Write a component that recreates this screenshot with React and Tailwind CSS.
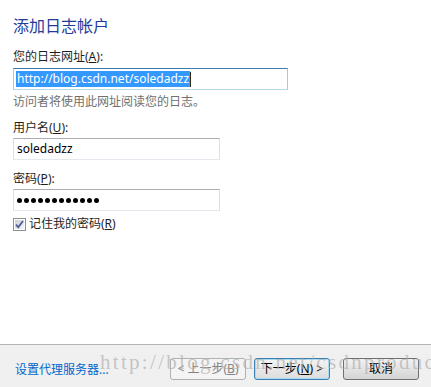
import React from 'react';

const font = "font-['Noto_Sans','Noto_Sans_CJK_SC',sans-serif]";

function Field({ focused, width, children }) {
  return (
    <div
      className={`${width} h-[22px] flex items-center pl-[2px] border ${
        focused
          ? 'border-t-[#3d7bad] border-x-[#a4c9e3] border-b-[#b7d9ed]'
          : 'border-t-[#abadb3] border-x-[#dbdfe6] border-b-[#e3e9ef]'
      } bg-white`}
    >
      {children}
    </div>
  );
}

function CheckBox() {
  return (
    <svg width="13" height="13" viewBox="0 0 13 13" className="shrink-0">
      <defs>
        <linearGradient id="cb" x1="0" y1="0" x2="1" y2="1">
          <stop offset="0" stopColor="#cbcfd5" />
          <stop offset="1" stopColor="#f6f6f6" />
        </linearGradient>
      </defs>
      <rect x="0.5" y="0.5" width="12" height="12" fill="#fff" stroke="#8e8f8f" />
      <rect x="2" y="2" width="9" height="9" fill="url(#cb)" />
      <path d="M3 6.5 L5.2 9.2 L10 3" fill="none" stroke="#4a5f97" strokeWidth="1.8" />
    </svg>
  );
}

function Button({ children, variant }) {
  const styles = {
    disabled: 'border-[#adb2b5] bg-[#f4f4f4] text-[#838383]',
    focus: 'border-[#3c7fb1] bg-gradient-to-b from-[#f4f4f4] to-[#dcdcdc] shadow-[inset_0_0_0_1px_#a8dcf6] text-black',
    normal: 'border-[#707070] bg-gradient-to-b from-[#f2f2f2] to-[#d4d4d4] text-black',
  };
  return (
    <div className={`w-[76px] h-[22px] rounded-[3px] border flex items-center justify-center text-[12px] ${styles[variant]}`}>
      {children}
    </div>
  );
}

export default function App() {
  return (
    <div className={`relative w-[431px] h-[387px] overflow-hidden flex flex-col bg-white text-[12px] leading-[16px] text-[#1e1e1e] ${font}`}>
      <div className="flex-1 flex flex-col items-start px-[13px] pt-[15px]">
        <h1 className="text-[16px] leading-[22px] text-[#1f3c99]">添加日志帐户</h1>

        <div className="mt-[12px]">您的日志网址(<u>A</u>):</div>
        <div className="mt-[3px]">
          <Field focused width="w-[275px]">
            <span className="bg-[#3399ff] text-white leading-[16px] px-[1px]">http://blog.csdn.net/soledadzz</span>
            <span className="w-px h-[15px] bg-[#3a2a10]" />
          </Field>
        </div>
        <div className="mt-[4px] text-[#707070]">访问者将使用此网址阅读您的日志。</div>

        <div className="mt-[10px]">用户名(<u>U</u>):</div>
        <div className="mt-[2px]">
          <Field width="w-[207px]">
            <span className="pl-[1px] text-black">soledadzz</span>
          </Field>
        </div>

        <div className="mt-[11px]">密码(<u>P</u>):</div>
        <div className="mt-[2px]">
          <Field width="w-[207px]">
            <div className="flex gap-[2px] pl-[1px]">
              {Array.from({ length: 12 }).map((_, i) => (
                <span key={i} className="w-[5px] h-[5px] rounded-full bg-black" />
              ))}
            </div>
          </Field>
        </div>

        <div className="mt-[5px] flex items-center gap-[3px]">
          <CheckBox />
          <span>记住我的密码(<u>R</u>)</span>
        </div>
      </div>

      <div className="h-[43px] border-t border-[#b4b4b4] bg-[#f0f0f0] flex items-center pt-[5px] pr-[12px]">
        <span className="pl-[15px] mt-[3px] text-[#0066cc]">设置代理服务器...</span>
        <div className="ml-auto flex items-center">
          <Button variant="disabled">&lt; 上一步(<u>B</u>)</Button>
          <div className="ml-[8px]">
            <Button variant="focus">下一步(<u>N</u>) &gt;</Button>
          </div>
          <div className="ml-[13px]">
            <Button variant="normal">取消</Button>
          </div>
        </div>
      </div>

      <div className="absolute left-[100px] top-[349px] pointer-events-none whitespace-nowrap font-['Liberation_Serif',serif] text-[21px] leading-[26px] tracking-[2.3px] text-[#b0b0b0]/70">
        http://blog.csdn.net/csdnproduct
      </div>
    </div>
  );
}
